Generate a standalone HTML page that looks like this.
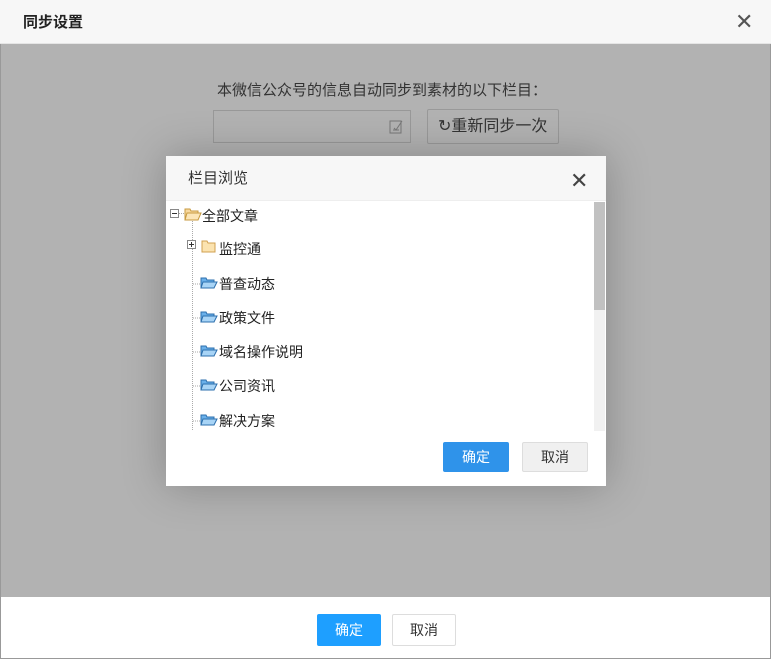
<!DOCTYPE html>
<html><head><meta charset="utf-8"><style>
*{margin:0;padding:0;box-sizing:border-box}
body{width:771px;height:659px;overflow:hidden;font-family:"Liberation Sans","Noto Sans CJK SC",sans-serif;background:#fff;position:relative;color:#333}
.top{position:absolute;left:0;top:0;width:771px;height:44px;background:#f7f7f7;border-bottom:1px solid #e5e5e5}
.top .t{position:absolute;left:23px;top:11px;font-size:15px;color:#222;font-weight:bold}
.x{position:absolute;font-size:22px;color:#555;line-height:1}
.mid{position:absolute;left:0;top:44px;width:771px;height:553px;background:#b2b2b2;border-left:1px solid #999;border-right:1px solid #999}
.desc{position:absolute;left:217px;top:79px;font-size:15px;color:#333}
.inp{position:absolute;left:213px;top:110px;width:198px;height:33px;border:1px solid #999;background:#b2b2b2}
.rb{position:absolute;left:427px;top:109px;width:132px;height:35px;border:1px solid #999;border-radius:2px;font-size:16px;line-height:33px;padding-left:10px;color:#333}
.foot{position:absolute;left:0;top:597px;width:771px;height:62px;background:#fff;border:1px solid #999;border-top:none}
.btn{position:absolute;width:64px;height:32px;font-size:14px;text-align:center;line-height:32px;border-radius:2px}
.dlg{position:absolute;left:166px;top:156px;width:440px;height:330px;background:#fff;box-shadow:0 0 40px rgba(0,0,0,.25)}
.dh{height:45px;background:#f7f7f7;border-bottom:1px solid #eee;font-size:15px;line-height:45px;padding-left:22px;color:#333}
.sb{position:absolute;left:428px;top:46px;width:11px;height:229px;background:#f1f1f1}
.sb i{display:block;height:108px;background:#c1c1c1}
.it{position:absolute;font-size:14px;color:#222}
</style></head><body>
<div class="top"><span class="t">同步设置</span><span class="x" style="left:735px;top:11px">✕</span></div>
<div class="mid"></div>
<div class="desc">本微信公众号的信息自动同步到素材的以下栏目：</div>
<div class="inp"><svg style="position:absolute;right:7px;top:8px" width="14" height="15" viewBox="0 0 14 15"><rect x="1" y="2" width="11" height="12" fill="none" stroke="#777"/><path d="M5 9l2 2 6-9" fill="none" stroke="#777"/><path d="M4 11h6" stroke="#777"/></svg></div>
<div class="rb">↻重新同步一次</div>
<div class="foot">
<div class="btn" style="left:316px;top:17px;background:#1e9fff;color:#fff">确定</div>
<div class="btn" style="left:391px;top:17px;border:1px solid #ddd;color:#333;line-height:30px">取消</div>
</div>
<div class="dlg">
<div class="dh">栏目浏览</div><span class="x" style="left:404px;top:14px;color:#444">✕</span>
<div class="sb"><i></i></div>
<svg style="position:absolute;left:0;top:46px" width="60" height="230">
<rect x="4.5" y="7.5" width="8" height="8" fill="#fff" stroke="#888"/><path d="M6 11.5h5" stroke="#333"/>
<path d="M13 11.5h5" stroke="#aaa" stroke-dasharray="1 1"/>
<path d="M26.5 19v210" stroke="#aaa" stroke-dasharray="1 1"/>
<path d="M19 7h5l1 2h7v9H19z" fill="#f8d9a0" stroke="#c79a40"/><path d="M21 11h14l-3 7H19z" fill="#fce6b8" stroke="#c79a40"/>
<rect x="21.5" y="38.5" width="8" height="8" fill="#fff" stroke="#888"/><path d="M23 42.5h5M25.5 40v5" stroke="#333"/>
<path d="M36 39h5l1 2h7v9H36z" fill="#fbe3b0" stroke="#d0a050"/>
</svg>
<svg style="position:absolute;left:26px;top:46px" width="30" height="230">
<g fill="#6ab0ea" stroke="#2c6fad">
<path d="M1 82h7" stroke="#aaa" stroke-dasharray="1 1" fill="none"/><path d="M9 76h5l1 2h7v8H9z"/><path d="M11 80h14l-3 6H9z" fill="#a8d4f6"/>
<path d="M1 116h7" stroke="#aaa" stroke-dasharray="1 1" fill="none"/><path d="M9 110h5l1 2h7v8H9z"/><path d="M11 114h14l-3 6H9z" fill="#a8d4f6"/>
<path d="M1 150h7" stroke="#aaa" stroke-dasharray="1 1" fill="none"/><path d="M9 144h5l1 2h7v8H9z"/><path d="M11 148h14l-3 6H9z" fill="#a8d4f6"/>
<path d="M1 184h7" stroke="#aaa" stroke-dasharray="1 1" fill="none"/><path d="M9 178h5l1 2h7v8H9z"/><path d="M11 182h14l-3 6H9z" fill="#a8d4f6"/>
<path d="M1 219h7" stroke="#aaa" stroke-dasharray="1 1" fill="none"/><path d="M9 213h5l1 2h7v8H9z"/><path d="M11 217h14l-3 6H9z" fill="#a8d4f6"/>
</g></svg>
<div class="it" style="left:36px;top:50px">全部文章</div>
<div class="it" style="left:53px;top:83px">监控通</div>
<div class="it" style="left:53px;top:118px">普查动态</div>
<div class="it" style="left:53px;top:152px">政策文件</div>
<div class="it" style="left:53px;top:186px">域名操作说明</div>
<div class="it" style="left:53px;top:220px">公司资讯</div>
<div class="it" style="left:53px;top:255px">解决方案</div>
<div class="btn" style="left:277px;top:286px;width:66px;height:30px;line-height:30px;background:#2f93ea;color:#fff">确定</div>
<div class="btn" style="left:356px;top:286px;width:66px;height:30px;line-height:28px;background:#f0f0f0;border:1px solid #ddd;color:#333">取消</div>
</div>
</body></html>
